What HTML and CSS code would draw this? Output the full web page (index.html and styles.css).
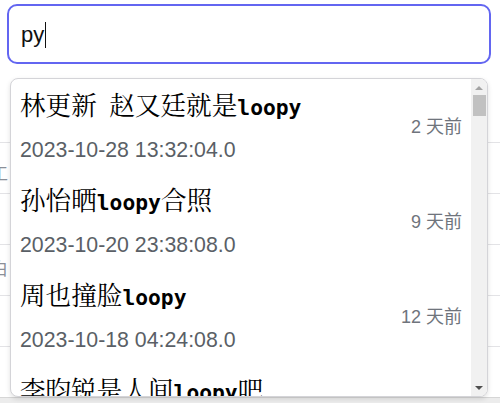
FILE: index.html
```html
<!DOCTYPE html>
<html lang="zh">
<head>
<meta charset="utf-8">
<link rel="stylesheet" href="styles.css">
</head>
<body>
<div class="page">
  <div class="search"><span class="query">py</span><span class="caret"></span></div>
  <ul class="bg-list">
    <li></li>
    <li><span class="frag frag-a">工</span></li>
    <li></li>
    <li><span class="frag frag-b">白</span></li>
    <li></li>
  </ul>
  <div class="bg-bar"></div>
  <div class="dropdown">
    <div class="results">
      <div class="item">
        <div class="main">
          <div class="title">林更新 赵又廷就是<b class="hl">loopy</b></div>
          <div class="date">2023-10-28 13:32:04.0</div>
        </div>
        <div class="ago">2 天前</div>
      </div>
      <div class="item">
        <div class="main">
          <div class="title">孙怡晒<b class="hl">loopy</b>合照</div>
          <div class="date">2023-10-20 23:38:08.0</div>
        </div>
        <div class="ago">9 天前</div>
      </div>
      <div class="item">
        <div class="main">
          <div class="title">周也撞脸<b class="hl">loopy</b></div>
          <div class="date">2023-10-18 04:24:08.0</div>
        </div>
        <div class="ago">12 天前</div>
      </div>
      <div class="item">
        <div class="main">
          <div class="title">李昀锐是人间<b class="hl">loopy</b>吧</div>
          <div class="date">2023-10-15 10:12:08.0</div>
        </div>
        <div class="ago">15 天前</div>
      </div>
    </div>
    <div class="scrollbar">
      <span class="arrow up"></span>
      <span class="thumb"></span>
      <span class="track"></span>
      <span class="arrow down"></span>
    </div>
  </div>
</div>
</body>
</html>
```

FILE: styles.css
```css
* { box-sizing: border-box; }
html, body { margin: 0; padding: 0; background: #fff; }
body { font-family: "Liberation Sans", "Noto Sans CJK SC", sans-serif; overflow: hidden; }

.page { position: relative; height: 403px; padding: 4px 9px 0 7px; }

.search {
  height: 60px;
  border: 2px solid #6366f1;
  border-radius: 10px;
  display: flex;
  align-items: center;
  padding: 0 12px;
  background: #fff;
}
.query { font-size: 22px; color: #111; line-height: 26px; padding-top: 2px; }
.caret { width: 1px; height: 26px; background: #111; margin-left: 1px; margin-top: 2px; }

.bg-list { list-style: none; margin: 28px -9px 0 -7px; padding: 0; }
.bg-list li { height: 51px; border-bottom: 1px solid #e3e3e6; display: flex; align-items: center; overflow: hidden; }
.frag { font-size: 17px; color: #8a8f98; margin-left: -9px; font-family: "Noto Sans CJK SC", sans-serif; }
.frag-a { margin-top: 8px; }
.frag-b { margin-top: -6px; }
.bg-bar { height: 6px; margin: 50px -9px 0 -7px; background: #ececec; border-top: 1px solid #d6d6d6; }

.dropdown {
  position: absolute;
  top: 78px; left: 10px;
  width: 478px; height: 319px;
  border: 1px solid #d4d4d8;
  border-radius: 8px;
  background: #fff;
  box-shadow: 0 2px 5px rgba(0,0,0,0.12);
  overflow: hidden;
  display: flex;
}
.results { flex: 1; overflow: hidden; }
.item {
  height: 95px;
  padding: 8px 9px 0 9px;
  display: flex;
  align-items: center;
}
.main { flex: 1; display: flex; flex-direction: column; align-self: flex-start; }
.title {
  font-family: "Noto Serif CJK SC", "Liberation Serif", "Noto Sans CJK SC", serif;
  font-size: 25.6px; line-height: 34px; color: #000;
  white-space: nowrap; word-spacing: 6px;
}
.hl { font-family: "DejaVu Sans Mono", monospace; font-size: 21.3px; font-weight: bold; word-spacing: 0; }
.date { font-size: 21.3px; line-height: 30px; margin-top: 10px; color: #5a5f66; }
.ago {
  font-family: "Liberation Sans", "Noto Sans CJK SC", sans-serif;
  font-size: 18px; color: #6f747c; margin-top: -12px; white-space: nowrap;
}

.scrollbar {
  width: 16px; background: #f1f1f1;
  display: flex; flex-direction: column; align-items: center;
}
.arrow { width: 0; height: 0; border-left: 4px solid transparent; border-right: 4px solid transparent; }
.arrow.up { border-bottom: 4px solid #a3a3a3; margin: 7px 0 5px; }
.arrow.down { border-top: 4px solid #505050; margin: 0 0 6px; }
.thumb { width: 13px; height: 21px; background: #c1c1c1; margin-left: 1px; }
.track { flex: 1; }
```
